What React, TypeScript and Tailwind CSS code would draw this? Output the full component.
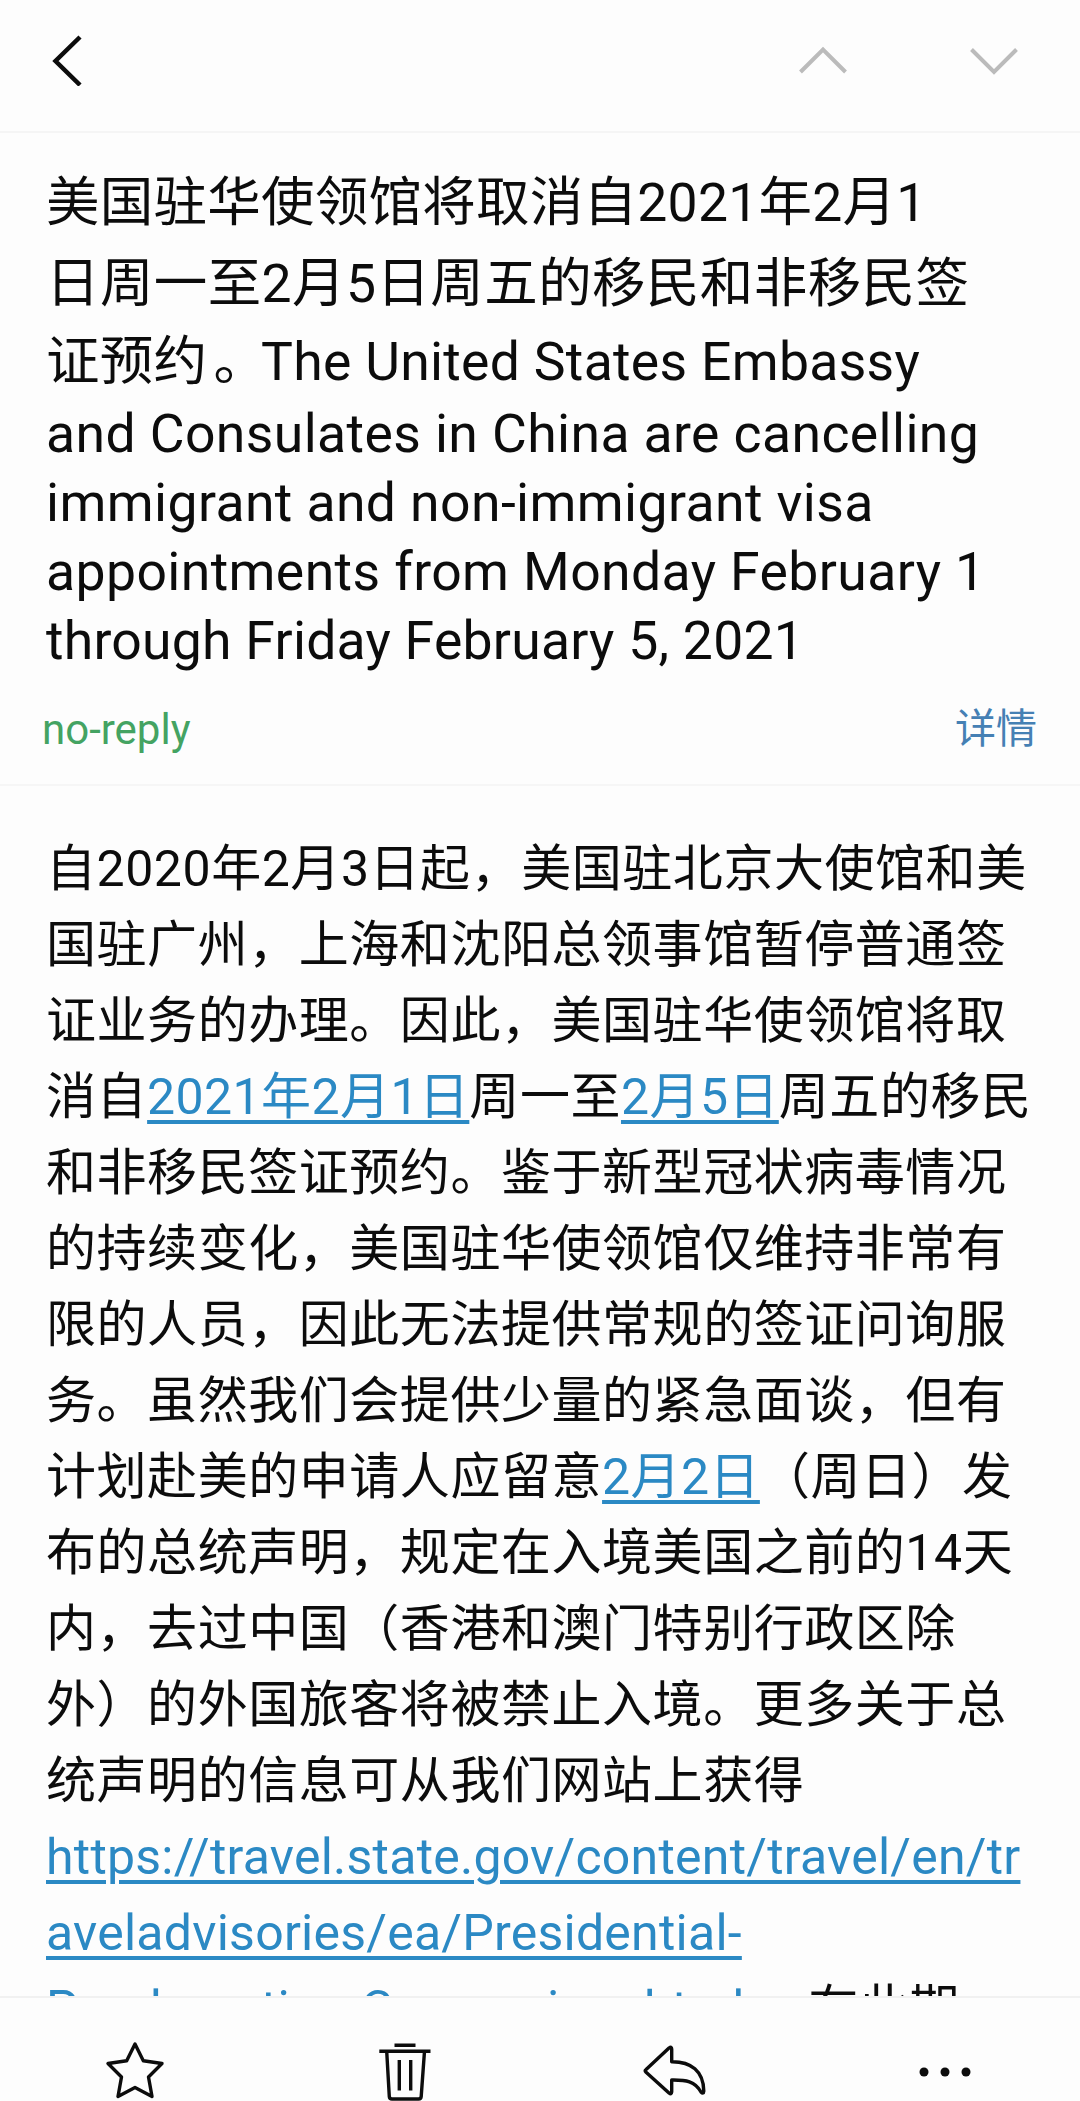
import type { ReactNode } from 'react'

interface Line {
  content: ReactNode
  className: string
}

function Link({ children, className = 'tracking-[0.24px]' }: { children: ReactNode; className?: string }) {
  return (
    <a className={`text-[#2b89c4] underline decoration-[3.5px] underline-offset-[6px] ${className}`}>
      {children}
    </a>
  )
}

function DateLink({ children }: { children: ReactNode }) {
  return <Link className="tracking-[0.4px]">{children}</Link>
}

const titleLines: Line[] = [
  { content: '美国驻华使领馆将取消自2021年2月1', className: 'h-[81px] leading-[80px] tracking-[0.25px]' },
  { content: '日周一至2月5日周五的移民和非移民签', className: 'h-[79px] leading-[79px] tracking-[0.4px]' },
  {
    content: <>证预约<span className="pl-1.5 tracking-[-6px]">。</span>The United States Embassy</>,
    className: 'h-[76px] leading-[78px] tracking-[0.3px]',
  },
  { content: 'and Consulates in China are cancelling', className: 'h-[69px] leading-[69px] tracking-[0.4px]' },
  { content: 'immigrant and non-immigrant visa', className: 'h-[69px] leading-[69px] tracking-[0.4px]' },
  { content: 'appointments from Monday February 1', className: 'h-[69px] leading-[69px] tracking-[0.4px]' },
  { content: 'through Friday February 5, 2021', className: 'h-[69px] leading-[69px] tracking-[0.25px]' },
]

const bodyLines: ReactNode[] = [
  '自2020年2月3日起，美国驻北京大使馆和美',
  '国驻广州，上海和沈阳总领事馆暂停普通签',
  '证业务的办理。因此，美国驻华使领馆将取',
  <>消自<DateLink>2021年2月1日</DateLink>周一至<DateLink>2月5日</DateLink>周五的移民</>,
  '和非移民签证预约。鉴于新型冠状病毒情况',
  '的持续变化，美国驻华使领馆仅维持非常有',
  '限的人员，因此无法提供常规的签证问询服',
  '务。虽然我们会提供少量的紧急面谈，但有',
  <>计划赴美的申请人应留意<DateLink>2月2日</DateLink>（周日）发</>,
  '布的总统声明，规定在入境美国之前的14天',
  '内，去过中国（香港和澳门特别行政区除',
  '外）的外国旅客将被禁止入境。更多关于总',
  '统声明的信息可从我们网站上获得',
  <Link>https://travel.state.gov/content/travel/en/tr</Link>,
  <Link>aveladvisories/ea/Presidential-</Link>,
  <><Link>Proclamation-Coronavirus.html</Link> 。在此期</>,
]

function Chevron({ d, className }: { d: string; className: string }) {
  return (
    <svg width="48" height="52" viewBox="0 0 48 52" fill="none" stroke="currentColor" className={className}>
      <path d={d} />
    </svg>
  )
}

function TopBar() {
  return (
    <header className="flex h-[133px] shrink-0 items-start border-b-2 border-[#f5f5f5] pt-[34px] pr-[62px] pl-[44px]">
      <button aria-label="Back">
        <Chevron d="M36 3 11.5 27 36 51" className="stroke-[4.5] text-[#0c0c0c]" />
      </button>
      <div className="ml-auto flex gap-[123px]">
        <button aria-label="Previous">
          <Chevron d="M1.5 38 24 15.5 46.5 38" className="stroke-[4] text-[#bbb]" />
        </button>
        <button aria-label="Next">
          <Chevron d="M1.5 15.5 24 38 46.5 15.5" className="stroke-[4] text-[#bbb]" />
        </button>
      </div>
    </header>
  )
}

function ToolIcon({ label, children }: { label: string; children: ReactNode }) {
  return (
    <button aria-label={label} className="flex items-end justify-center">
      <svg
        width="60"
        height="60"
        viewBox="0 0 60 60"
        fill="none"
        stroke="currentColor"
        strokeWidth="3.4"
        strokeLinejoin="round"
        className="overflow-visible"
      >
        {children}
      </svg>
    </button>
  )
}

function Toolbar() {
  return (
    <footer className="grid h-[105px] shrink-0 grid-cols-4 border-t-2 border-[#f1f1f1]">
      <ToolIcon label="Star">
        <path d="M30 3 38.3 19.7 57 22.5 43.5 36 47 55.5 30 46.5 13 55.5 16.5 36 3 22.5 21.7 19.7Z" />
      </ToolIcon>
      <ToolIcon label="Delete">
        <path d="M19.5 4.2h21M4.3 10.2h51.2M11.7 10.2 14.3 55.5Q14.5 58 17 58H43.5Q46 58 46.2 55.5L49.5 10.2M24.3 19v30.5M35.7 19v30.5" />
      </ToolIcon>
      <ToolIcon label="Reply">
        <path d="M.8 28.8 24 7Q26.7 5 26.7 8V20.7C46 20.5 58.5 30 58.8 50Q58.5 53.5 56 51C50 40 41 38.8 26.7 39V51Q26.5 54 24 52L.8 31Q-.5 29.8.8 28.8Z" />
      </ToolIcon>
      <ToolIcon label="More">
        <g fill="currentColor" stroke="none">
          <circle cx="9" cy="31" r="4.5" />
          <circle cx="30" cy="31" r="4.5" />
          <circle cx="51" cy="31" r="4.5" />
        </g>
      </ToolIcon>
    </footer>
  )
}

export default function App() {
  return (
    <div
      lang="zh-CN"
      className="flex h-[2101px] w-[1080px] flex-col overflow-hidden bg-[#fdfdfd] font-['Roboto','Noto_Sans_CJK_SC',sans-serif] whitespace-nowrap text-[#0c0c0c]"
    >
      <TopBar />

      <section className="shrink-0 border-b-2 border-[#f6f6f6] pt-[30px]">
        <h1 className="pl-[46px] text-[53.5px] font-normal">
          {titleLines.map((line, i) => (
            <div key={i} className={line.className}>{line.content}</div>
          ))}
        </h1>
        <div className="flex h-[109px] items-center justify-between pr-[43px] pl-[42px] text-[41px]">
          <span className="text-[42px] text-[#44a362]">no-reply</span>
          <button className="text-[#4580b4]">详情</button>
        </div>
      </section>

      <main className="min-h-0 flex-1 overflow-hidden pt-[45px] pl-[46px] text-[50px] leading-[76px] tracking-[0.55px]">
        {bodyLines.map((line, i) => (
          <p key={i}>{line}</p>
        ))}
      </main>

      <Toolbar />
    </div>
  )
}
